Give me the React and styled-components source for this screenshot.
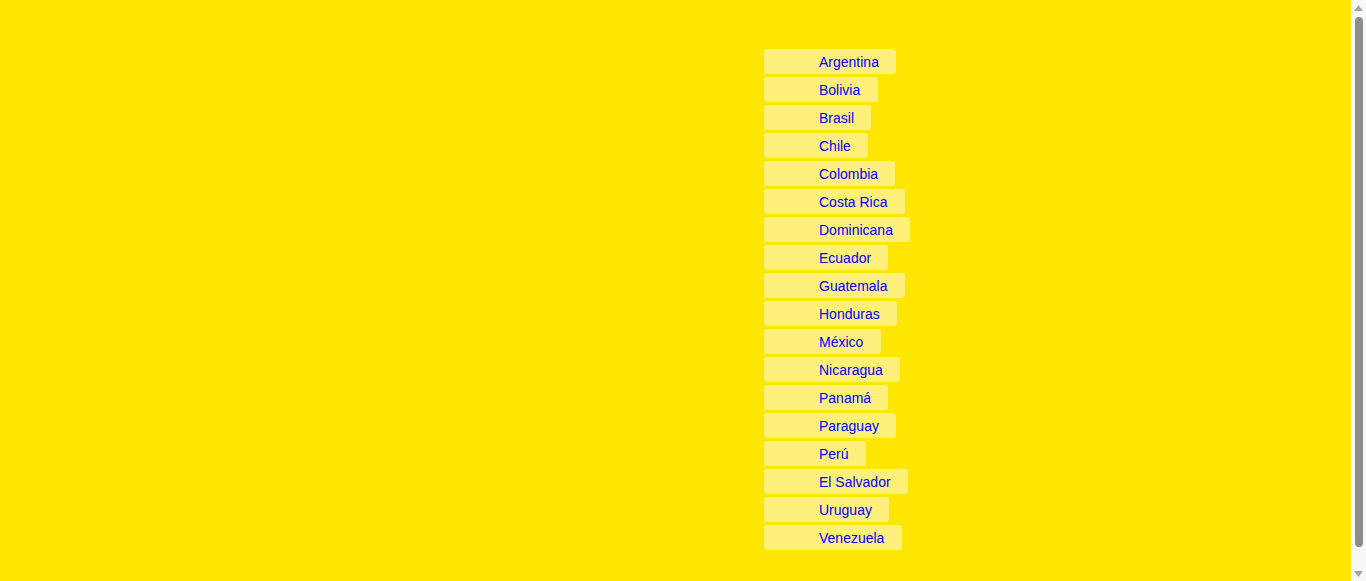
import React from "react";
import styled, { createGlobalStyle } from "styled-components";

const Global = createGlobalStyle`
  html, body { margin: 0; padding: 0; background: #ffe600; }
  body { font-family: "Liberation Sans", Arial, sans-serif; }
`;

const Page = styled.div`
  min-height: 604px;
  box-sizing: border-box;
  padding: 49px 0 0 764px;
  background: #ffe600;
`;

const List = styled.ul`
  list-style: none;
  margin: 0;
  padding: 0;
  display: flex;
  flex-direction: column;
  align-items: flex-start;
  gap: 3px;
`;

const Item = styled.li`
  display: flex;
  align-items: center;
  height: 25px;
  box-sizing: border-box;
  padding: 0 17.3px 0 55px;
  background: #fff07c;
  border-radius: 3px;
  color: #0000ff;
  font-size: 14px;
  line-height: 16px;
  cursor: pointer;
`;

/* decorative scrollbar overlay, as seen in the screenshot */
const ScrollTrack = styled.div`
  position: fixed;
  top: 0;
  right: 0;
  width: 15px;
  height: 100vh;
  background: #f8f8f8;
  display: flex;
  flex-direction: column;
  align-items: center;
`;

const ArrowBtn = styled.div`
  height: 15px;
  width: 15px;
  display: flex;
  align-items: center;
  justify-content: center;
  flex: none;
`;

const Thumb = styled.div`
  flex: 1;
  width: 8px;
  margin: 2px 0 19px;
  border-radius: 4px;
  background: #8d8d8d;
`;

const Arrow = ({ down }) => (
  <ArrowBtn>
    <svg width="9" height="6" viewBox="0 0 9 6">
      <path
        d={down ? "M0 0 L9 0 L4.5 6 Z" : "M0 6 L9 6 L4.5 0 Z"}
        fill="#a3a3a3"
      />
    </svg>
  </ArrowBtn>
);

const countries = [
  "Argentina",
  "Bolivia",
  "Brasil",
  "Chile",
  "Colombia",
  "Costa Rica",
  "Dominicana",
  "Ecuador",
  "Guatemala",
  "Honduras",
  "México",
  "Nicaragua",
  "Panamá",
  "Paraguay",
  "Perú",
  "El Salvador",
  "Uruguay",
  "Venezuela",
];

export default function App() {
  return (
    <>
      <Global />
      <Page>
        <List>
          {countries.map((c) => (
            <Item key={c}>{c}</Item>
          ))}
        </List>
      </Page>
      <ScrollTrack aria-hidden="true">
        <Arrow />
        <Thumb />
        <Arrow down />
      </ScrollTrack>
    </>
  );
}
